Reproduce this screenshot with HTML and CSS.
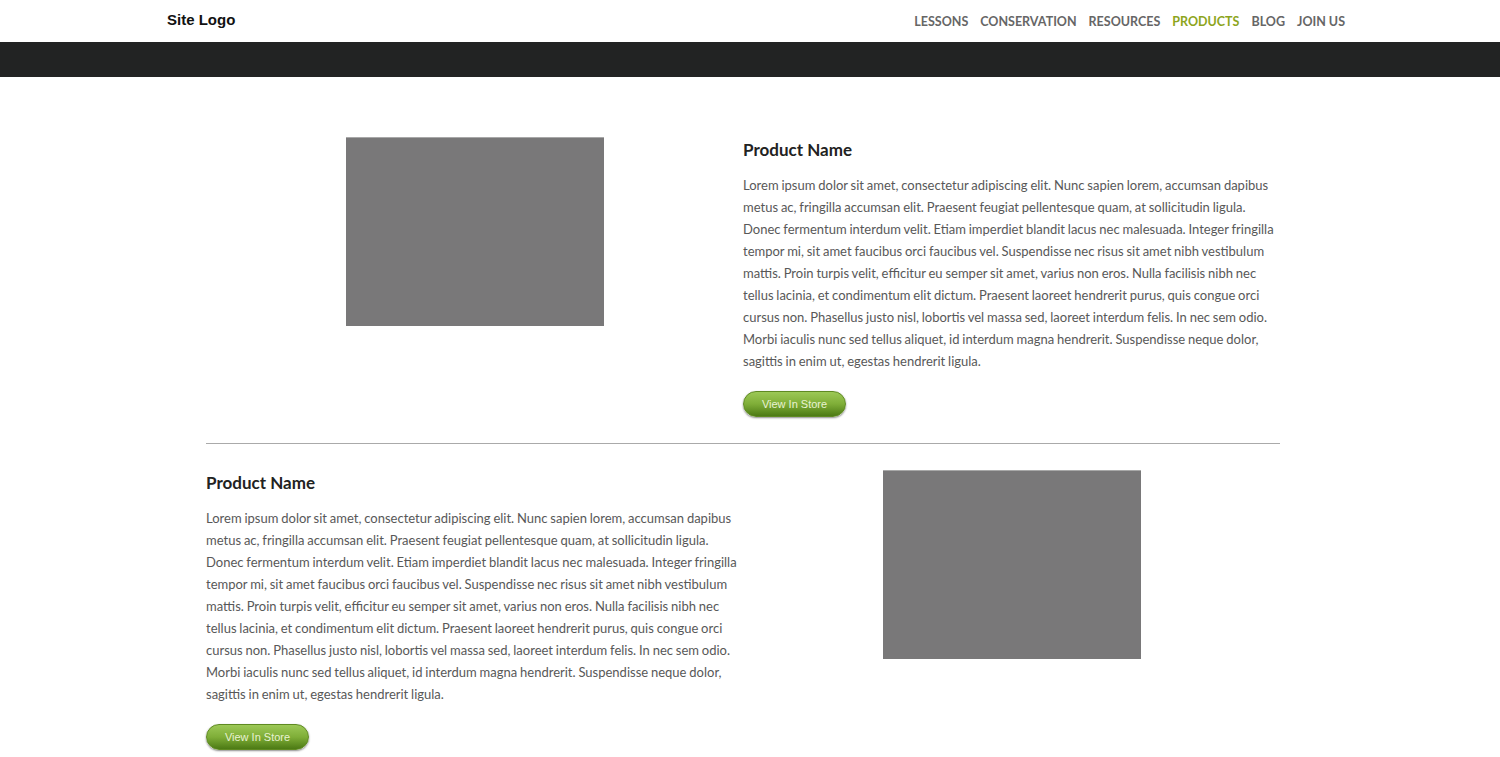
FILE: index.html
```html
<!DOCTYPE html>
<html lang="en">
<head>
<meta charset="utf-8">
<title>Products</title>
<link rel="stylesheet" href="styles.css">
</head>
<body>
<header class="site-header">
  <div class="header-inner">
    <a class="logo" href="#">Site Logo</a>
    <nav class="main-nav">
      <a href="#">LESSONS</a>
      <a href="#">CONSERVATION</a>
      <a href="#">RESOURCES</a>
      <a href="#" class="active">PRODUCTS</a>
      <a href="#">BLOG</a>
      <a href="#">JOIN US</a>
    </nav>
  </div>
</header>
<div class="dark-band"></div>

<main class="products">
  <section class="product">
    <div class="col col-media"><div class="placeholder"></div></div>
    <div class="col col-text">
      <h2>Product Name</h2>
      <p>Lorem ipsum dolor sit amet, consectetur adipiscing elit. Nunc sapien lorem, accumsan dapibus metus ac, fringilla accumsan elit. Praesent feugiat pellentesque quam, at sollicitudin ligula. Donec fermentum interdum velit. Etiam imperdiet blandit lacus nec malesuada. Integer fringilla tempor mi, sit amet faucibus orci faucibus vel. Suspendisse nec risus sit amet nibh vestibulum mattis. Proin turpis velit, efficitur eu semper sit amet, varius non eros. Nulla facilisis nibh nec tellus lacinia, et condimentum elit dictum. Praesent laoreet hendrerit purus, quis congue orci cursus non. Phasellus justo nisl, lobortis vel massa sed, laoreet interdum felis. In nec sem odio. Morbi iaculis nunc sed tellus aliquet, id interdum magna hendrerit. Suspendisse neque dolor, sagittis in enim ut, egestas hendrerit ligula.</p>
      <a class="btn" href="#">View In Store</a>
    </div>
  </section>
  <hr class="divider">
  <section class="product reverse">
    <div class="col col-text">
      <h2>Product Name</h2>
      <p>Lorem ipsum dolor sit amet, consectetur adipiscing elit. Nunc sapien lorem, accumsan dapibus metus ac, fringilla accumsan elit. Praesent feugiat pellentesque quam, at sollicitudin ligula. Donec fermentum interdum velit. Etiam imperdiet blandit lacus nec malesuada. Integer fringilla tempor mi, sit amet faucibus orci faucibus vel. Suspendisse nec risus sit amet nibh vestibulum mattis. Proin turpis velit, efficitur eu semper sit amet, varius non eros. Nulla facilisis nibh nec tellus lacinia, et condimentum elit dictum. Praesent laoreet hendrerit purus, quis congue orci cursus non. Phasellus justo nisl, lobortis vel massa sed, laoreet interdum felis. In nec sem odio. Morbi iaculis nunc sed tellus aliquet, id interdum magna hendrerit. Suspendisse neque dolor, sagittis in enim ut, egestas hendrerit ligula.</p>
      <a class="btn" href="#">View In Store</a>
    </div>
    <div class="col col-media"><div class="placeholder"></div></div>
  </section>
  <hr class="divider">
  <section class="product">
    <div class="col col-media"><div class="placeholder"></div></div>
    <div class="col col-text">
      <h2>Product Name</h2>
      <p>Lorem ipsum dolor sit amet, consectetur adipiscing elit. Nunc sapien lorem, accumsan dapibus metus ac, fringilla accumsan elit. Praesent feugiat pellentesque quam, at sollicitudin ligula. Donec fermentum interdum velit. Etiam imperdiet blandit lacus nec malesuada. Integer fringilla tempor mi, sit amet faucibus orci faucibus vel. Suspendisse nec risus sit amet nibh vestibulum mattis. Proin turpis velit, efficitur eu semper sit amet, varius non eros. Nulla facilisis nibh nec tellus lacinia, et condimentum elit dictum. Praesent laoreet hendrerit purus, quis congue orci cursus non. Phasellus justo nisl, lobortis vel massa sed, laoreet interdum felis. In nec sem odio. Morbi iaculis nunc sed tellus aliquet, id interdum magna hendrerit. Suspendisse neque dolor, sagittis in enim ut, egestas hendrerit ligula.</p>
      <a class="btn" href="#">View In Store</a>
    </div>
  </section>
  <hr class="divider">
  <section class="product reverse">
    <div class="col col-text">
      <h2>Product Name</h2>
      <p>Lorem ipsum dolor sit amet, consectetur adipiscing elit. Nunc sapien lorem, accumsan dapibus metus ac, fringilla accumsan elit. Praesent feugiat pellentesque quam, at sollicitudin ligula. Donec fermentum interdum velit. Etiam imperdiet blandit lacus nec malesuada. Integer fringilla tempor mi, sit amet faucibus orci faucibus vel. Suspendisse nec risus sit amet nibh vestibulum mattis. Proin turpis velit, efficitur eu semper sit amet, varius non eros. Nulla facilisis nibh nec tellus lacinia, et condimentum elit dictum. Praesent laoreet hendrerit purus, quis congue orci cursus non. Phasellus justo nisl, lobortis vel massa sed, laoreet interdum felis. In nec sem odio. Morbi iaculis nunc sed tellus aliquet, id interdum magna hendrerit. Suspendisse neque dolor, sagittis in enim ut, egestas hendrerit ligula.</p>
      <a class="btn" href="#">View In Store</a>
    </div>
    <div class="col col-media"><div class="placeholder"></div></div>
  </section>
  <hr class="divider">
  <section class="product">
    <div class="col col-media"><div class="placeholder"></div></div>
    <div class="col col-text">
      <h2>Product Name</h2>
      <p>Lorem ipsum dolor sit amet, consectetur adipiscing elit. Nunc sapien lorem, accumsan dapibus metus ac, fringilla accumsan elit. Praesent feugiat pellentesque quam, at sollicitudin ligula. Donec fermentum interdum velit. Etiam imperdiet blandit lacus nec malesuada. Integer fringilla tempor mi, sit amet faucibus orci faucibus vel. Suspendisse nec risus sit amet nibh vestibulum mattis. Proin turpis velit, efficitur eu semper sit amet, varius non eros. Nulla facilisis nibh nec tellus lacinia, et condimentum elit dictum. Praesent laoreet hendrerit purus, quis congue orci cursus non. Phasellus justo nisl, lobortis vel massa sed, laoreet interdum felis. In nec sem odio. Morbi iaculis nunc sed tellus aliquet, id interdum magna hendrerit. Suspendisse neque dolor, sagittis in enim ut, egestas hendrerit ligula.</p>
      <a class="btn" href="#">View In Store</a>
    </div>
  </section>
</main>
</body>
</html>
```

FILE: styles.css
```css
html, body {
  margin: 0;
  padding: 0;
  background: #ffffff;
}

body {
  font-family: Lato, "Liberation Sans", sans-serif;
  color: #555555;
}

a {
  text-decoration: none;
}

.site-header {
  height: 42px;
  background: #ffffff;
}

.header-inner {
  display: flex;
  justify-content: space-between;
  align-items: flex-start;
  padding: 0 155px 0 167px;
}

.logo {
  font-family: "Liberation Sans", Arial, sans-serif;
  font-weight: bold;
  font-size: 15px;
  color: #111111;
  line-height: 18px;
  padding-top: 11px;
}

.main-nav {
  display: flex;
  gap: 12px;
  padding-top: 14px;
}

.main-nav a {
  font-family: Lato, "Liberation Sans", sans-serif;
  font-weight: bold;
  font-size: 12.5px;
  line-height: 16px;
  color: #666666;
}

.main-nav a.active {
  color: #8da51c;
}

.dark-band {
  height: 35px;
  background: #222323;
}

.products {
  width: 1074px;
  margin: 60px 0 300px 206px;
}

.product {
  display: grid;
  grid-template-columns: 537px 537px;
  align-items: start;
}

.col-media {
  display: flex;
  justify-content: center;
}

.placeholder {
  width: 258px;
  height: 189px;
  background: #797879;
  border-top: 1px solid #a8a8a8;
  box-sizing: border-box;
}

.col-text h2 {
  margin: 3px 0 0;
  font-family: Lato, "Liberation Sans", sans-serif;
  font-weight: bold;
  font-size: 17px;
  line-height: 20px;
  color: #222222;
}

.col-text p {
  margin: 14px 0 0;
  font-size: 13px;
  line-height: 22px;
  word-spacing: -0.5px;
  color: #585858;
}

.btn {
  display: inline-block;
  margin-top: 19px;
  width: 103px;
  height: 26px;
  line-height: 24px;
  box-sizing: border-box;
  text-align: center;
  border-radius: 13px;
  font-family: "Liberation Sans", Arial, sans-serif;
  font-size: 11px;
  color: #e8f2d2;
  background: linear-gradient(to bottom, #9cc856 0%, #7fae38 50%, #4c7a14 100%);
  border: 1px solid #5f8a22;
  box-shadow: 0 1px 2px rgba(0, 0, 0, 0.45);
}

.divider {
  border: 0;
  border-top: 1px solid #aaaaaa;
  margin: 26px 0 26px;
  height: 0;
}
```
